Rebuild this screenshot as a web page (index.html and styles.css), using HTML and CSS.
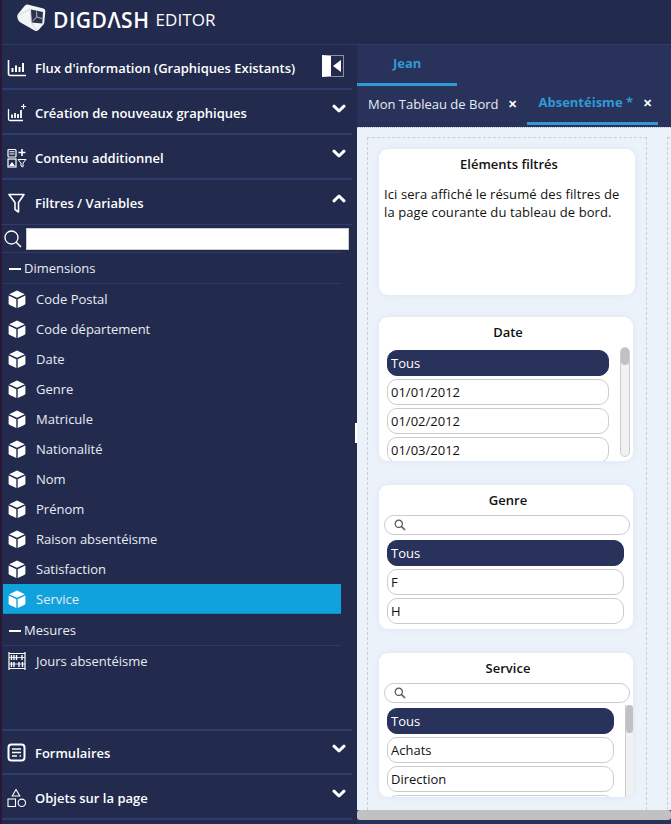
FILE: index.html
```html
<!DOCTYPE html>
<html lang="fr">
  <head>
    <meta charset="UTF-8" />
    <title>DigDash Editor</title>
    <link rel="stylesheet" href="styles.css">
  </head>
  <body>
    <svg class="defs" width="0" height="0">
      <symbol id="cube" viewBox="0 0 18 18">
        <path d="M9 0.5 L16.8 4.2 L9 7.8 L1.2 4.2 Z" fill="#fff"/>
        <path d="M0.6 5.6 L8.3 9.2 L8.3 18 L1.8 15 Q0.6 14.4 0.6 13.2 Z" fill="#fff"/>
        <path d="M17.4 5.6 L9.7 9.2 L9.7 18 L16.2 15 Q17.4 14.4 17.4 13.2 Z" fill="#fff"/>
      </symbol>
      <symbol id="chevron" viewBox="0 0 14 10">
        <path d="M2 2.2 L7 7 L12 2.2" fill="none" stroke="#fff" stroke-width="3" stroke-linecap="round" stroke-linejoin="round"/>
      </symbol>
    </svg>

    <header class="topbar">
      <svg class="logo" width="30" height="30" viewBox="0 0 30 30">
        <path d="M10.5 0.5 L26.5 4.5 Q28.5 5 28.3 7.5 L27.3 18.5 Q27 20 26 21 L21.5 26 Q20 27.5 18 26.8 L3.5 18.5 Q1.5 17.3 0.8 15 L0.3 13 Q0 11.5 1 10 L7.5 2 Q9 0.2 10.5 0.5 Z" fill="#f3f4f6"/>
        <path d="M14 5.5 L26 8 L25.3 19.5 L14.5 18.5 Z" fill="#2b3350"/>
        <path d="M19.5 7.5 L19.8 13 L15.5 17 M19.8 13 L25 14.5" fill="none" stroke="#b9bdc9" stroke-width="1"/>
        <path d="M1.5 11.5 L13 5 M13 5 L14.5 18.5 L19 26" fill="none" stroke="#c9ccd6" stroke-width=".7"/>
      </svg>
      <span class="brand">DIGDΛSH</span>
      <span class="brand-sub">EDITOR</span>
    </header>

    <div class="app">
      <aside class="sidebar">
        <div class="acc-head">
          <svg class="acc-icon" width="20" height="20" viewBox="0 0 20 20" fill="none" stroke="#fff">
            <path d="M1.5 2 V15.5 Q1.5 17.5 3.5 17.5 H19" stroke-width="1.6"/>
            <path d="M5.5 10 V14 M9 7.5 V14 M12.5 9 V14 M16 5 V14" stroke-width="2"/>
          </svg>
          <span>Flux d'information (Graphiques Existants)</span>
          <button class="collapse-btn"><svg width="10" height="14" viewBox="0 0 10 14"><path d="M9 1 V13 L1 7 Z" fill="#fff"/></svg></button>
        </div>
        <div class="acc-head">
          <svg class="acc-icon" width="20" height="20" viewBox="0 0 20 20" fill="none" stroke="#fff">
            <path d="M1.5 6 V16 Q1.5 17.5 3 17.5 H16" stroke-width="1.3"/>
            <path d="M5 11.5 V15 M8 10 V15 M11 11 V15 M14 7 V15" stroke-width="1.8"/>
            <path d="M16.5 1 V6 M14 3.5 H19" stroke-width="1.2"/>
          </svg>
          <span>Création de nouveaux graphiques</span>
          <svg class="chevron" width="14" height="10"><use href="#chevron"/></svg>
        </div>
        <div class="acc-head">
          <svg class="acc-icon" width="20" height="20" viewBox="0 0 20 20" fill="none" stroke="#fff">
            <rect x="1" y="1.5" width="8" height="7.5" rx="1" stroke-width="1.2"/>
            <path d="M2.5 3.8 H7.5 M2.5 6 H7.5" stroke-width="1.1"/>
            <path d="M15 1 V8 M11.5 4.5 H18.5" stroke-width="1.6"/>
            <rect x="1" y="11" width="8" height="8" stroke-width="1.2"/>
            <path d="M2 18 L5 14 L8 18 Z" fill="#fff" stroke="none"/>
            <path d="M11 11.5 H19 L16 15 V19 L14 18 V15 Z" stroke-width="1"/>
          </svg>
          <span>Contenu additionnel</span>
          <svg class="chevron" width="14" height="10"><use href="#chevron"/></svg>
        </div>
        <div class="acc-head acc-open">
          <svg class="acc-icon" width="20" height="20" viewBox="0 0 20 20" fill="none" stroke="#fff">
            <path d="M2 1.5 H17 L11.5 9.5 V19 L8 16.5 V9.5 Z" stroke-width="1.6" stroke-linejoin="round"/>
          </svg>
          <span>Filtres / Variables</span>
          <svg class="chevron chevron-up" width="14" height="10"><use href="#chevron"/></svg>
        </div>

        <div class="search-row">
          <svg class="search-glass" width="18" height="18" viewBox="0 0 18 18" fill="none" stroke="#fff">
            <circle cx="7.5" cy="7.5" r="6.5" stroke-width="1.3"/>
            <path d="M12.2 12.2 L17 17" stroke-width="1.5"/>
          </svg>
          <input class="search-input" type="text" />
        </div>

        <div class="tree">
          <div class="tree-group"><span class="dash"></span>Dimensions</div>
          <div class="tree-items">
            <div class="tree-item"><svg width="18" height="18"><use href="#cube"/></svg>Code Postal</div>
            <div class="tree-item"><svg width="18" height="18"><use href="#cube"/></svg>Code département</div>
            <div class="tree-item"><svg width="18" height="18"><use href="#cube"/></svg>Date</div>
            <div class="tree-item"><svg width="18" height="18"><use href="#cube"/></svg>Genre</div>
            <div class="tree-item"><svg width="18" height="18"><use href="#cube"/></svg>Matricule</div>
            <div class="tree-item"><svg width="18" height="18"><use href="#cube"/></svg>Nationalité</div>
            <div class="tree-item"><svg width="18" height="18"><use href="#cube"/></svg>Nom</div>
            <div class="tree-item"><svg width="18" height="18"><use href="#cube"/></svg>Prénom</div>
            <div class="tree-item"><svg width="18" height="18"><use href="#cube"/></svg>Raison absentéisme</div>
            <div class="tree-item"><svg width="18" height="18"><use href="#cube"/></svg>Satisfaction</div>
            <div class="tree-item selected"><svg width="18" height="18"><use href="#cube"/></svg>Service</div>
          </div>
          <div class="tree-group"><span class="dash"></span>Mesures</div>
          <div class="tree-items">
            <div class="tree-item">
              <svg width="18" height="18" viewBox="0 0 18 18" fill="none" stroke="#fff">
                <path d="M1 0 V18 M17 0 V18 M1 1.5 H17 M1 16.5 H17" stroke-width="1.2"/>
                <path d="M1 5.5 H17 M1 12 H17" stroke-width=".8"/>
                <path d="M3.5 3 V8 M6 3 V8 M8.5 3 V8 M14 3 V8 M3.5 10 V15 M6 10 V15 M11 10 V15 M14.5 10 V15" stroke-width="1.4"/>
              </svg>
              Jours absentéisme
            </div>
          </div>
        </div>

        <div class="acc-head acc-first">
          <svg class="acc-icon" width="20" height="20" viewBox="0 0 20 20" fill="none" stroke="#fff">
            <rect x="1.5" y="1.5" width="16" height="16" rx="3" stroke-width="2"/>
            <path d="M5 6 H14 M5 9.5 H14 M5 13 H10 M12.5 13 H14" stroke-width="1.6"/>
          </svg>
          <span>Formulaires</span>
          <svg class="chevron" width="14" height="10"><use href="#chevron"/></svg>
        </div>
        <div class="acc-head">
          <svg class="acc-icon" width="20" height="20" viewBox="0 0 20 20" fill="none" stroke="#fff" stroke-width="1.1">
            <path d="M9 1.5 L12.8 8 H5.2 Z"/>
            <rect x="1" y="11" width="7.5" height="7.5"/>
            <circle cx="14.8" cy="14.8" r="3.7"/>
          </svg>
          <span>Objets sur la page</span>
          <svg class="chevron" width="14" height="10"><use href="#chevron"/></svg>
        </div>
      </aside>

      <span class="resize-handle"></span>

      <main class="content">
        <div class="user-tabs">
          <div class="user-tab">Jean</div>
        </div>
        <div class="page-tabs">
          <div class="page-tab">Mon Tableau de Bord <span class="tab-close">✕</span></div>
          <div class="page-tab active">Absentéisme * <span class="tab-close">✕</span></div>
        </div>

        <div class="canvas">
          <div class="column">
            <section class="card card-summary">
              <h2>Eléments filtrés</h2>
              <p>Ici sera affiché le résumé des filtres de la page courante du tableau de bord.</p>
            </section>

            <section class="card card-date">
              <h2>Date</h2>
              <div class="list-wrap">
                <ul class="options">
                  <li class="on">Tous</li>
                  <li>01/01/2012</li>
                  <li>01/02/2012</li>
                  <li>01/03/2012</li>
                </ul>
                <div class="scroll scroll-round"><span class="thumb"></span></div>
              </div>
            </section>

            <section class="card card-genre">
              <h2>Genre</h2>
              <div class="mini-search">
                <svg width="12" height="12" viewBox="0 0 12 12" fill="none" stroke="#555">
                  <circle cx="4.8" cy="4.8" r="3.6" stroke-width="1.2"/>
                  <path d="M7.5 7.5 L11 11" stroke-width="1.6"/>
                </svg>
              </div>
              <ul class="options">
                <li class="on">Tous</li>
                <li>F</li>
                <li>H</li>
              </ul>
            </section>

            <section class="card card-service">
              <h2>Service</h2>
              <div class="mini-search">
                <svg width="12" height="12" viewBox="0 0 12 12" fill="none" stroke="#555">
                  <circle cx="4.8" cy="4.8" r="3.6" stroke-width="1.2"/>
                  <path d="M7.5 7.5 L11 11" stroke-width="1.6"/>
                </svg>
              </div>
              <div class="list-wrap">
                <ul class="options">
                  <li class="on">Tous</li>
                  <li>Achats</li>
                  <li>Direction</li>
                  <li></li>
                </ul>
                <div class="scroll"><span class="thumb"></span></div>
              </div>
            </section>
          </div>
          <div class="column column-next"></div>
        </div>

        <div class="hscroll"></div>
      </main>
    </div>
  </body>
</html>
```

FILE: styles.css
```css
/* DigDash editor */
* {
  box-sizing: border-box;
}
html,
body {
  height: 100%;
}
body {
  margin: 0;
  width: 671px;
  height: 824px;
  overflow: hidden;
  display: flex;
  flex-direction: column;
  font-family: "Open Sans", "Noto Sans", sans-serif;
  font-size: 13px;
  color: #fff;
  background-color: #222b4e;
  border-left: 2px solid #2b1738;
}
.defs {
  position: absolute;
}

/* top bar */
.topbar {
  height: 45px;
  flex: none;
  display: flex;
  align-items: center;
  padding: 0 0 5px 15px;
  background-color: #222b4e;
  border-bottom: 1px solid #2f3b6e;
}
.logo {
  flex: none;
  margin: -2px 6px 0 0;
}
.brand {
  font-size: 21px;
  font-weight: 600;
  letter-spacing: 0.5px;
}
.brand-sub {
  margin-left: 6px;
  font-size: 17px;
  letter-spacing: 0.1px;
}

/* sidebar */
.app {
  flex: 1;
  display: flex;
  min-height: 0;
  position: relative;
}
.sidebar {
  width: 355px;
  flex: none;
  display: flex;
  flex-direction: column;
  padding-bottom: 4px;
}
.acc-head {
  height: 45px;
  width: 350px;
  flex: none;
  position: relative;
  display: flex;
  align-items: center;
  padding: 3px 0 0 5px;
  font-weight: 600;
  border-bottom: 2px solid #2f3b6e;
}
.acc-open {
  padding-top: 1px;
  border-bottom-width: 1px;
}
.acc-first {
  padding-top: 1px;
  border-top: 2px solid #2f3b6e;
  height: 46px;
}
.acc-icon {
  flex: none;
  margin-right: 8px;
}
.chevron {
  margin-left: auto;
  margin-right: 6px;
  margin-top: -9px;
}
.acc-first .chevron {
  margin-top: -7px;
}
.chevron-up {
  transform: rotate(180deg);
}
.collapse-btn {
  position: absolute;
  left: 320px;
  top: 10px;
  width: 22px;
  height: 22px;
  padding: 0 1px 0 0;
  display: flex;
  align-items: center;
  justify-content: flex-end;
  border: 1px solid #8b90a6;
  border-left: 9px solid #fff;
  background-color: #222b4e;
}

.search-row {
  height: 28px;
  width: 339px;
  flex: none;
  display: flex;
  align-items: center;
  gap: 4px;
  padding-left: 2px;
  border-bottom: 1px solid #2f3b6e;
}
.search-glass {
  flex: none;
}
.search-input {
  width: 323px;
  height: 22px;
  flex: none;
  border: 1px solid #ccc;
  background-color: #fff;
}

.tree {
  flex: 1;
  width: 338px;
  margin-left: 1px;
}
.tree-group {
  height: 31px;
  display: flex;
  align-items: center;
  padding-left: 6px;
  color: #e8ebf3;
  border-bottom: 1px solid #2f3b6e;
}
.tree-items + .tree-group {
  height: 32px;
}
.dash {
  width: 12px;
  height: 2px;
  margin-right: 3px;
  margin-top: 2px;
  background-color: #fff;
}
.tree-item {
  height: 30px;
  display: flex;
  align-items: center;
  gap: 10px;
  padding-left: 5px;
  color: #e8ebf3;
}
.selected {
  background-color: #10a2dd;
  border-bottom: 1px solid #1289bd;
}

.resize-handle {
  position: absolute;
  left: 353px;
  top: 378px;
  width: 2px;
  height: 20px;
  background-color: #fff;
}

/* right panel */
.content {
  width: 314px;
  flex: none;
  display: flex;
  flex-direction: column;
  background-color: #29325a;
}
.user-tabs {
  height: 41px;
  flex: none;
}
.user-tab {
  width: 100px;
  height: 41px;
  padding-top: 9px;
  padding-left: 36px;
  font-weight: 700;
  color: #2f9ad6;
  border-bottom: 3px solid #2f9ad6;
}
.page-tabs {
  height: 41px;
  flex: none;
  display: flex;
  padding-left: 11px;
}
.page-tab {
  height: 39px;
  display: flex;
  align-items: center;
  padding-bottom: 4px;
  color: #e8ebf3;
}
.page-tab.active {
  margin-left: 10px;
  padding: 0 6px 4px 11px;
  font-weight: 700;
  color: #2f9ad6;
  border-bottom: 3px solid #2f9ad6;
}
.tab-close {
  margin-left: 10px;
  font-size: 11px;
  font-weight: 700;
  color: #fff;
}

.canvas {
  flex: 1;
  min-height: 0;
  display: flex;
  gap: 20px;
  padding: 9px 0 0 10px;
  overflow: hidden;
  background-color: #ecf2fa;
  border-top: 1px dotted #b9c0d0;
}
.column {
  width: 280px;
  flex: none;
  padding: 11px 0 0 11px;
  border: 1px dashed #c9ced9;
  border-bottom: none;
}
.column-next {
  width: 40px;
}
.hscroll {
  height: 14px;
  flex: none;
  background-color: #29325a;
}
.hscroll::before {
  content: "";
  display: block;
  height: 10px;
  border-radius: 3px;
  background-color: #c1c1c1;
}

/* cards */
.card {
  width: 254px;
  background-color: #fff;
  border-radius: 9px;
  color: #111;
  overflow: hidden;
  box-shadow: 0 0 6px rgba(120, 140, 180, 0.12);
}
.card h2 {
  margin: 0;
  padding: 6px 0 0 4px;
  height: 24px;
  font-size: 13px;
  line-height: 18px;
  font-weight: 600;
  text-align: center;
}
.card-summary {
  width: 256px;
  height: 146px;
  margin-bottom: 22px;
}
.card-summary p {
  margin: 12px 0 0;
  padding: 0 15px 0 5px;
  font-size: 13px;
  line-height: 18px;
  letter-spacing: 0.1px;
}
.card-date,
.card-genre,
.card-service {
  height: 144px;
  margin-bottom: 24px;
}
.card-date h2 {
  margin-bottom: 9px;
}
.list-wrap {
  display: flex;
  align-items: flex-start;
}
.options {
  flex: 1;
  min-width: 0;
  margin: 0;
  padding: 0 0 0 8px;
  list-style: none;
}
.options li {
  height: 26px;
  margin-bottom: 3px;
  padding-left: 3px;
  line-height: 25px;
  font-size: 13px;
  border: 1px solid #ccc;
  border-radius: 10px;
}
.options li.on {
  color: #fff;
  background-color: #29325a;
  border-color: #29325a;
}
.card-genre .options {
  padding-right: 9px;
}
.card-date .options {
  padding-right: 11px;
}
.scroll {
  width: 8px;
  height: 112px;
  flex: none;
  background-color: #f1f1f1;
  border-left: 1px solid #ccc;
}
.scroll-round {
  width: 10px;
  height: 110px;
  margin: -3px 3px 0 0;
  border: 1px solid #ccc;
  border-radius: 5px;
}
.thumb {
  display: block;
  height: 28px;
  border-radius: 4px;
  background-color: #c1c1c1;
}
.scroll-round .thumb {
  height: 17px;
}
.card-service .options {
  padding-right: 11px;
}
.card-service .scroll {
  margin-top: -3px;
}
.mini-search {
  width: 246px;
  height: 20px;
  margin: 6px 0 5px 5px;
  padding: 3px 0 0 9px;
  background-color: #fff;
  border: 1px solid #ccc;
  border-radius: 10px;
  line-height: 0;
}
```
